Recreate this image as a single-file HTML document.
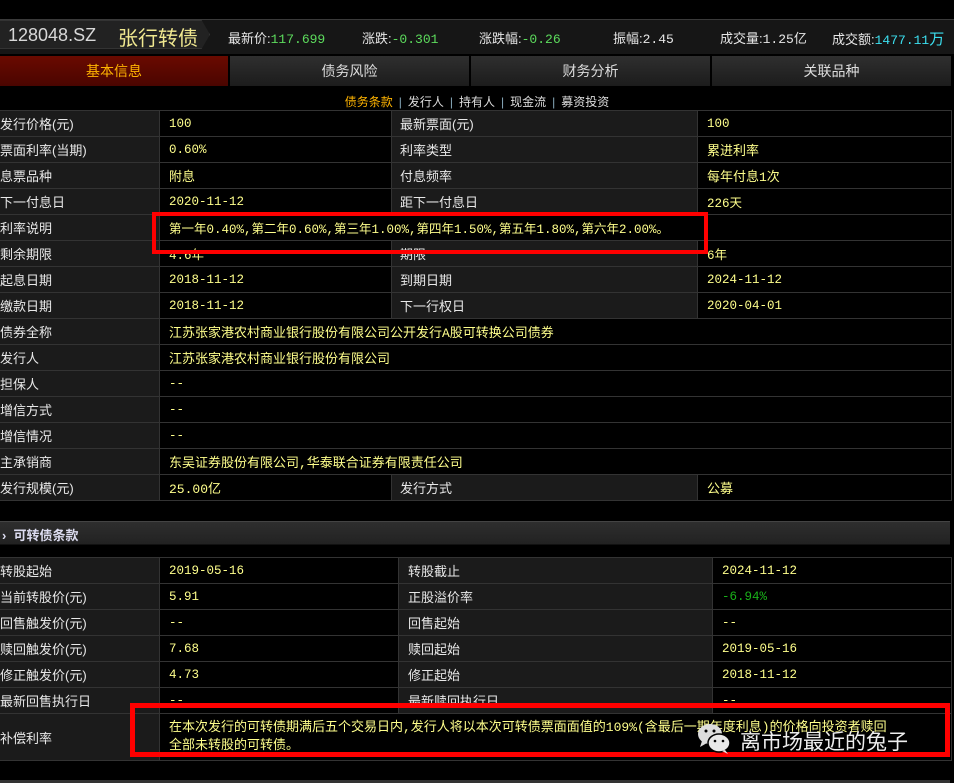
<!DOCTYPE html>
<html><head><meta charset="utf-8"><style>
*{margin:0;padding:0;box-sizing:border-box}
body{width:954px;height:783px;background:#000;overflow:hidden;position:relative;font-family:"Liberation Sans","Noto Sans CJK SC",sans-serif;font-size:13px;color:#e6e6e6}
.a{position:absolute}
.m{font-family:"Liberation Mono","Noto Sans CJK SC",monospace}
.hdr{left:0;top:19px;width:954px;height:35px;background:#161616;border-top:1px solid #3a3a3a}
.code{left:0;top:20px;width:210px;height:29px;background:#222;border:1px solid #333;border-left:none;clip-path:polygon(0 0,96% 0,100% 50%,96% 100%,0 100%)}
.tab{top:56px;height:30px;background:linear-gradient(#2f2f2f,#1c1c1c);color:#ddd;font-size:14px;text-align:center;line-height:30px}
.sub{top:93px;left:0;width:954px;text-align:center;font-size:12px;color:#ddd}
.sub b{font-weight:normal;color:#8ab;margin:0 6px}
table{position:absolute;border-collapse:collapse;table-layout:fixed}
td{height:26px;border:1px solid #333;padding:0 0 0 9px;white-space:nowrap;overflow:hidden;font-size:13px}
td.l{background:#1b1b1b;color:#e8e8e8;padding-left:0}
td.v{background:#000;color:#ffff8c;font-size:12.5px;font-family:"Liberation Mono","Noto Sans CJK SC",monospace}
.red{border:4px solid #f00}
</style></head><body>
<div class="a hdr"></div>
<div class="a code"></div>
<div class="a" style="left:8px;top:25px;font-size:18px;color:#d8d8d8">128048.SZ</div>
<div class="a" style="left:118px;top:22px;font-size:20px;color:#f0e890">张行转债</div>
<div class="a" style="top:28px;left:228px;white-space:nowrap">最新价:<span class="m" style="color:#5ddc5d">117.699</span></div>
<div class="a" style="top:28px;left:362px">涨跌:<span class="m" style="color:#5ddc5d">-0.301</span></div>
<div class="a" style="top:28px;left:479px">涨跌幅:<span class="m" style="color:#5ddc5d">-0.26</span></div>
<div class="a" style="top:28px;left:613px">振幅:<span class="m">2.45</span></div>
<div class="a" style="top:28px;left:720px">成交量:<span class="m">1.25</span>亿</div>
<div class="a" style="top:28px;left:832px;white-space:nowrap">成交额:<span class="m" style="color:#3ce0f0">1477.11</span><span style="color:#3ce0f0;font-size:15px">万</span></div>
<div class="a tab" style="left:0;width:228px;background:linear-gradient(#6a0a00,#4a0500);color:#ffb400">基本信息</div>
<div class="a tab" style="left:230px;width:239px">债务风险</div>
<div class="a tab" style="left:471px;width:239px">财务分析</div>
<div class="a tab" style="left:712px;width:239px">关联品种</div>
<div class="a sub"><span style="color:#ffb400">债务条款</span><b>|</b>发行人<b>|</b>持有人<b>|</b>现金流<b>|</b>募资投资</div>

<table style="left:-1px;top:110px;width:952px">
<col style="width:160px"><col style="width:232px"><col style="width:306px"><col style="width:254px">
<tr><td class="l">发行价格(元)</td><td class="v">100</td><td class="l" style="padding-left:8px">最新票面(元)</td><td class="v">100</td></tr>
<tr><td class="l">票面利率(当期)</td><td class="v">0.60%</td><td class="l" style="padding-left:8px">利率类型</td><td class="v" style="font-size:13px">累进利率</td></tr>
<tr><td class="l">息票品种</td><td class="v" style="font-size:13px">附息</td><td class="l" style="padding-left:8px">付息频率</td><td class="v" style="font-size:13px">每年付息1次</td></tr>
<tr><td class="l">下一付息日</td><td class="v">2020-11-12</td><td class="l" style="padding-left:8px">距下一付息日</td><td class="v">226天</td></tr>
<tr><td class="l">利率说明</td><td class="v" colspan="3">第一年0.40%,第二年0.60%,第三年1.00%,第四年1.50%,第五年1.80%,第六年2.00%。</td></tr>
<tr><td class="l">剩余期限</td><td class="v">4.6年</td><td class="l" style="padding-left:8px">期限</td><td class="v">6年</td></tr>
<tr><td class="l">起息日期</td><td class="v">2018-11-12</td><td class="l" style="padding-left:8px">到期日期</td><td class="v">2024-11-12</td></tr>
<tr><td class="l">缴款日期</td><td class="v">2018-11-12</td><td class="l" style="padding-left:8px">下一行权日</td><td class="v">2020-04-01</td></tr>
<tr><td class="l">债券全称</td><td class="v" colspan="3" style="font-size:13px">江苏张家港农村商业银行股份有限公司公开发行A股可转换公司债券</td></tr>
<tr><td class="l">发行人</td><td class="v" colspan="3" style="font-size:13px">江苏张家港农村商业银行股份有限公司</td></tr>
<tr><td class="l">担保人</td><td class="v" colspan="3">--</td></tr>
<tr><td class="l">增信方式</td><td class="v" colspan="3">--</td></tr>
<tr><td class="l">增信情况</td><td class="v" colspan="3">--</td></tr>
<tr><td class="l">主承销商</td><td class="v" colspan="3" style="font-size:13px">东吴证券股份有限公司,华泰联合证券有限责任公司</td></tr>
<tr><td class="l">发行规模(元)</td><td class="v" style="font-size:13px">25.00亿</td><td class="l" style="padding-left:8px">发行方式</td><td class="v" style="font-size:13px">公募</td></tr>
</table>

<div class="a" style="left:0;top:521px;width:950px;height:24px;background:linear-gradient(#2e2e2e,#222);border-top:1px solid #444;border-bottom:1px solid #111"></div>
<div class="a" style="left:2px;top:525px;font-size:13px;font-weight:bold;color:#dcdcf0">›&nbsp; 可转债条款</div>

<table style="left:-1px;top:557px;width:952px">
<col style="width:160px"><col style="width:239px"><col style="width:314px"><col style="width:239px">
<tr><td class="l">转股起始</td><td class="v">2019-05-16</td><td class="l" style="padding-left:9px">转股截止</td><td class="v">2024-11-12</td></tr>
<tr><td class="l">当前转股价(元)</td><td class="v">5.91</td><td class="l" style="padding-left:9px">正股溢价率</td><td class="v" style="color:#19b019">-6.94%</td></tr>
<tr><td class="l">回售触发价(元)</td><td class="v">--</td><td class="l" style="padding-left:9px">回售起始</td><td class="v">--</td></tr>
<tr><td class="l">赎回触发价(元)</td><td class="v">7.68</td><td class="l" style="padding-left:9px">赎回起始</td><td class="v">2019-05-16</td></tr>
<tr><td class="l">修正触发价(元)</td><td class="v">4.73</td><td class="l" style="padding-left:9px">修正起始</td><td class="v">2018-11-12</td></tr>
<tr><td class="l">最新回售执行日</td><td class="v">--</td><td class="l" style="padding-left:9px">最新赎回执行日</td><td class="v">--</td></tr>
<tr><td class="l" style="height:47px">补偿利率</td><td class="v" colspan="3" style="font-size:13px;line-height:18px">在本次发行的可转债期满后五个交易日内,发行人将以本次可转债票面面值的109%(含最后一期年度利息)的价格向投资者赎回<br>全部未转股的可转债。</td></tr>
</table>
<div class="a" style="left:0;top:780px;width:950px;height:3px;background:#333"></div>

<div class="a red" style="left:152px;top:212px;width:556px;height:42px"></div>
<div class="a red" style="left:130px;top:703px;width:820px;height:54px;border-width:5px"></div>

<svg class="a" style="left:696px;top:722px" width="36" height="34" viewBox="0 0 36 34">
<ellipse cx="14" cy="12" rx="12" ry="10" fill="#ddd"/>
<path d="M6 19 L4 25 L11 21Z" fill="#ddd"/>
<ellipse cx="23" cy="21" rx="11" ry="9" fill="#e8e8e8" stroke="#000" stroke-width="1.5"/>
<path d="M29 28 L32 32 L26 29Z" fill="#e8e8e8"/>
<circle cx="10" cy="9" r="1.5" fill="#000"/><circle cx="18" cy="9" r="1.5" fill="#000"/>
<circle cx="19" cy="19" r="1.3" fill="#000"/><circle cx="27" cy="19" r="1.3" fill="#000"/>
</svg>
<div class="a" style="left:740px;top:726px;font-size:21px;color:#eee;text-shadow:0 0 2px #000">离市场最近的兔子</div>
</body></html>
